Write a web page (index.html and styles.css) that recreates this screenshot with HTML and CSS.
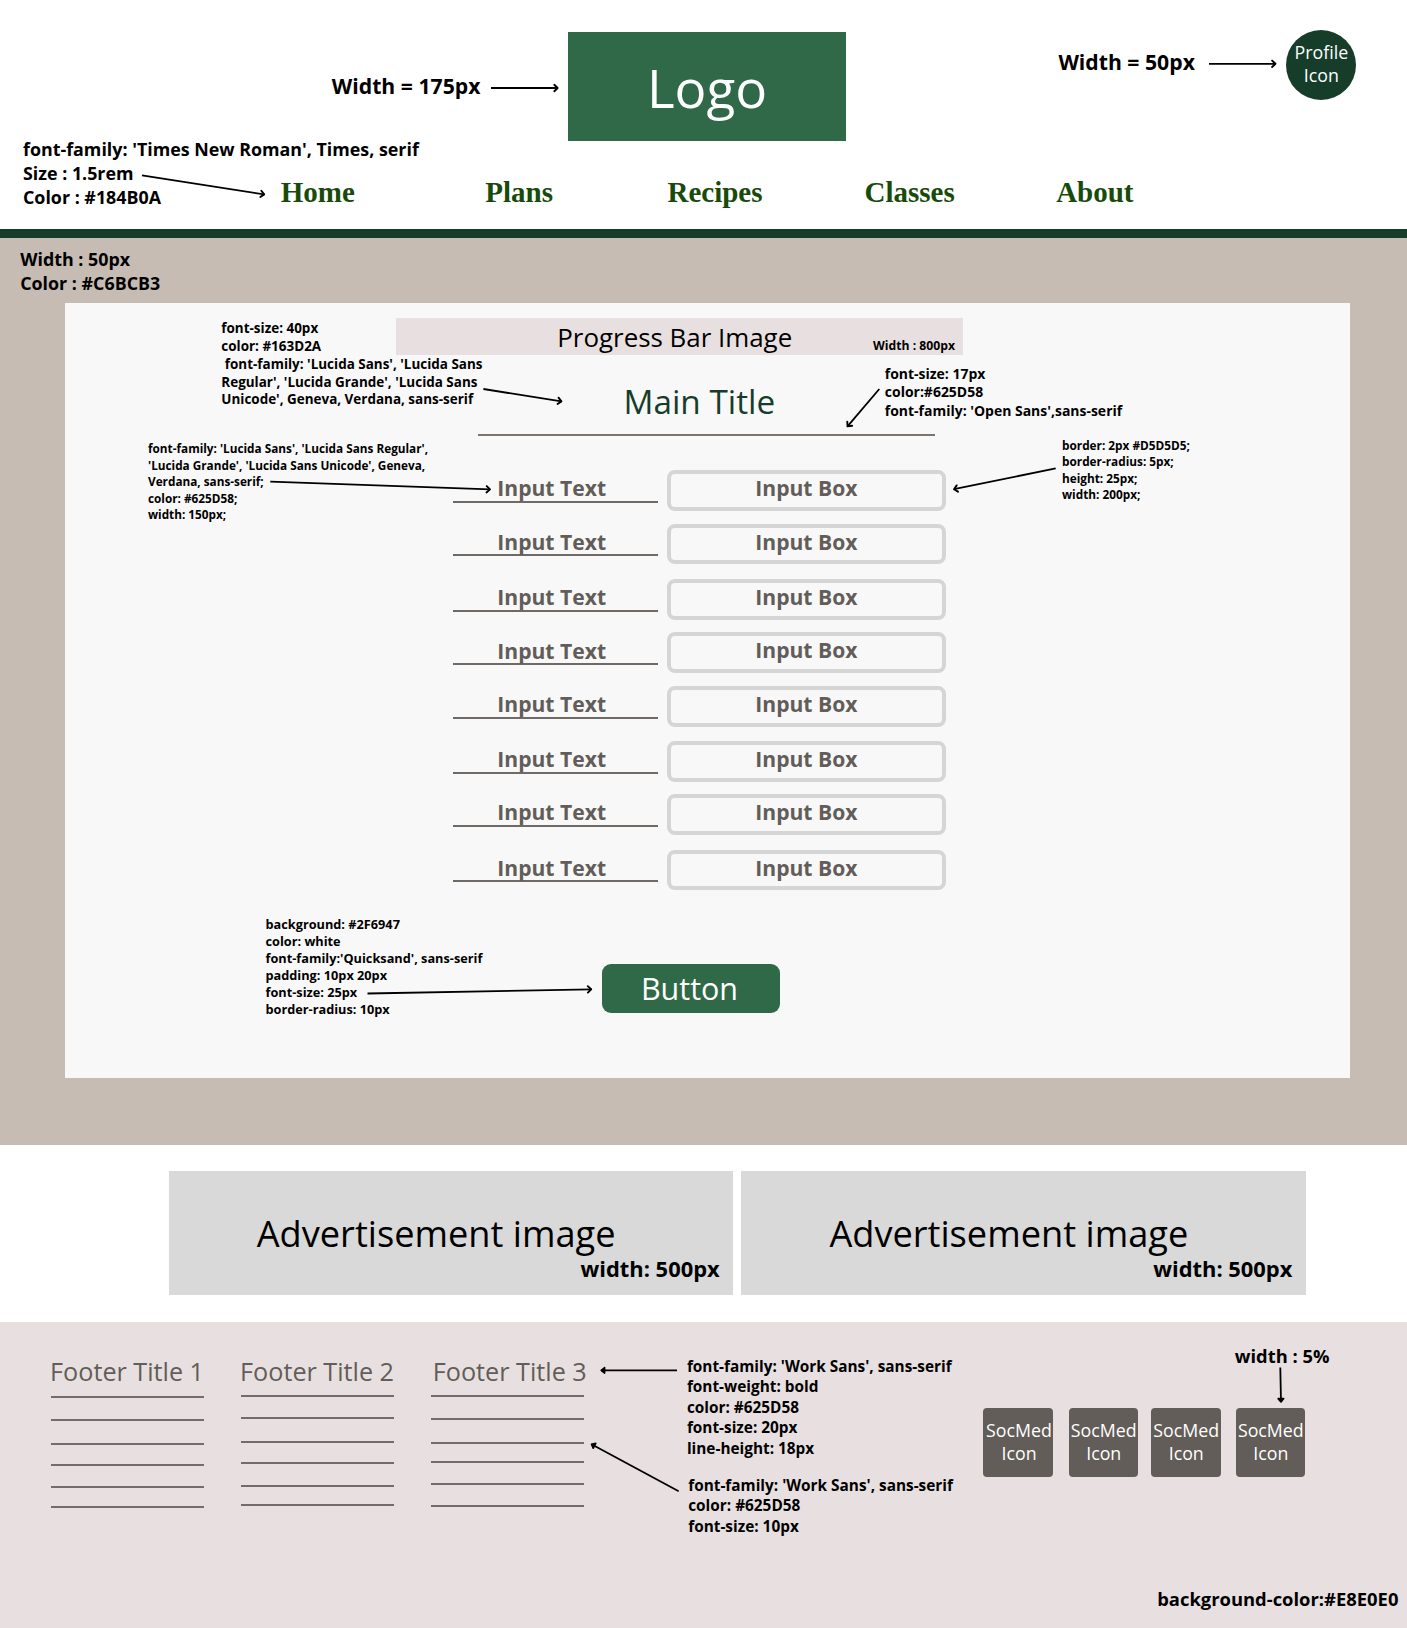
FILE: index.html
```html
<!DOCTYPE html>
<html lang="en">
<head>
<meta charset="utf-8">
<title>Form page wireframe</title>
<link rel="stylesheet" href="styles.css">
</head>
<body>
<div class="page">
  <header class="header">
    <div class="header-top">
      <div class="logo">Logo</div>
      <div class="profile">Profile<br>Icon</div>
    </div>
    <nav class="nav"><a>Home</a><a>Plans</a><a>Recipes</a><a>Classes</a><a>About</a></nav>
  </header>

  <main class="main">
    <section class="panel">
      <div class="progress">Progress Bar Image</div>
      <h1 class="title">Main Title</h1>
      <div class="title-rule"></div>
      <div class="form">
        <div class="row"><label class="label">Input Text</label><div class="box">Input Box</div></div>
        <div class="row"><label class="label">Input Text</label><div class="box">Input Box</div></div>
        <div class="row"><label class="label">Input Text</label><div class="box">Input Box</div></div>
        <div class="row"><label class="label label-low">Input Text</label><div class="box">Input Box</div></div>
        <div class="row"><label class="label">Input Text</label><div class="box">Input Box</div></div>
        <div class="row"><label class="label">Input Text</label><div class="box">Input Box</div></div>
        <div class="row"><label class="label">Input Text</label><div class="box">Input Box</div></div>
        <div class="row"><label class="label">Input Text</label><div class="box">Input Box</div></div>
      </div>
      <div class="button">Button</div>
    </section>
  </main>

  <section class="ads">
    <div class="ad"><div class="ad-name">Advertisement image</div><div class="ad-width">width: 500px</div></div>
    <div class="ad"><div class="ad-name">Advertisement image</div><div class="ad-width">width: 500px</div></div>
  </section>

  <footer class="footer">
    <div class="col col-1">
      <h2 class="col-title">Footer Title 1</h2>
      <ul class="lines"><li></li><li></li><li></li><li></li><li></li><li></li></ul>
    </div>
    <div class="col col-2">
      <h2 class="col-title">Footer Title 2</h2>
      <ul class="lines"><li></li><li></li><li></li><li></li><li></li><li></li></ul>
    </div>
    <div class="col col-3">
      <h2 class="col-title">Footer Title 3</h2>
      <ul class="lines"><li></li><li></li><li></li><li></li><li></li><li></li></ul>
    </div>
    <div class="social">
      <div class="soc">SocMed<br>Icon</div>
      <div class="soc">SocMed<br>Icon</div>
      <div class="soc">SocMed<br>Icon</div>
      <div class="soc">SocMed<br>Icon</div>
    </div>
  </footer>

  <!-- Annotations pinned over the wireframe -->
  <div class="note note-logo">Width = 175px</div>
  <div class="note note-profile">Width = 50px</div>
  <div class="note note-nav">font-family: 'Times New Roman', Times, serif</div>
  <div class="note note-nav-size">Size : 1.5rem
Color : #184B0A</div>
  <div class="note note-margin">Width : 50px
Color : #C6BCB3</div>
  <div class="note note-title">font-size: 40px
color: #163D2A
 font-family: 'Lucida Sans', 'Lucida Sans
Regular', 'Lucida Grande', 'Lucida Sans
Unicode', Geneva, Verdana, sans-serif</div>
  <div class="note note-progress">Width : 800px</div>
  <div class="note note-rule">font-size: 17px
color:#625D58
font-family: 'Open Sans',sans-serif</div>
  <div class="note note-label">font-family: 'Lucida Sans', 'Lucida Sans Regular',
'Lucida Grande', 'Lucida Sans Unicode', Geneva,
Verdana, sans-serif;
color: #625D58;
width: 150px;</div>
  <div class="note note-box">border: 2px #D5D5D5;
border-radius: 5px;
height: 25px;
width: 200px;</div>
  <div class="note note-button">background: #2F6947
color: white
font-family:'Quicksand', sans-serif
padding: 10px 20px
font-size: 25px
border-radius: 10px</div>
  <div class="note note-foot-title">font-family: 'Work Sans', sans-serif
font-weight: bold
color: #625D58
font-size: 20px
line-height: 18px</div>
  <div class="note note-foot-text">font-family: 'Work Sans', sans-serif
color: #625D58
font-size: 10px</div>
  <div class="note note-social">width : 5%</div>
  <div class="note note-footer">background-color:#E8E0E0</div>

  <svg class="arrows" width="1407" height="1628" viewBox="0 0 1407 1628" aria-hidden="true">
    <defs>
      <marker id="open" markerUnits="userSpaceOnUse" markerWidth="12" markerHeight="12" refX="8" refY="6" orient="auto">
        <path d="M4.6 2.8 L8 6 L4.6 9.2" fill="none" stroke="#000" stroke-width="1.9" stroke-linecap="round" stroke-linejoin="round"/>
      </marker>
      <marker id="solid" markerUnits="userSpaceOnUse" markerWidth="12" markerHeight="12" refX="8" refY="6" orient="auto">
        <path d="M4.6 3.2 L8 6 L4.6 8.8 Z" fill="#000" stroke="#000" stroke-width="1.6" stroke-linejoin="round"/>
      </marker>
    </defs>
    <g stroke="#000" stroke-width="1.8" fill="none">
      <path marker-end="url(#open)" d="M491 88H557.7"/>
      <path marker-end="url(#open)" d="M1209 63.8H1275.5"/>
      <path marker-end="url(#open)" d="M142 175.3L264.2 194.4"/>
      <path marker-end="url(#open)" d="M483.4 389L561.4 401.4"/>
      <path marker-end="url(#open)" d="M270.3 481.7L490 489.4"/>
      <path marker-end="url(#open)" d="M879.3 389L847.5 426.3"/>
      <path marker-end="url(#open)" d="M1055.7 468.3L954 489.2"/>
      <path marker-end="url(#open)" d="M367.5 993.5L591.2 989.3"/>
      <path marker-end="url(#solid)" d="M677 1370.3H601.2"/>
      <path marker-end="url(#solid)" d="M678.7 1491.3L591.5 1444.2"/>
      <path marker-end="url(#solid)" d="M1280.3 1367.5L1281 1402"/>
    </g>
  </svg>
</div>
</body>
</html>
```
FILE: styles.css
```css
* { box-sizing: border-box; }

body {
  margin: 0;
  background: #fff;
  color: #000;
  font-family: "Open Sans", sans-serif;
}

.page {
  position: relative;
  width: 1407px;
  height: 1628px;
  display: flex;
  flex-direction: column;
  overflow: hidden;
}

/* Header */
.header {
  height: 238px;
  border-bottom: 9px solid #163d2a;
  flex: none;
}

.header-top {
  display: flex;
  align-items: flex-start;
  height: 172px;
  padding: 30px 0 0 568px;
}

.logo {
  width: 278px;
  height: 109px;
  margin-top: 2.45px;
  padding-top: 1px;
  background: #2f6947;
  color: #fff;
  font-size: 53px;
  line-height: 110px;
  text-align: center;
}

.profile {
  width: 70px;
  height: 70px;
  margin-left: 440.4px;
  padding-top: 10.5px;
  border-radius: 50%;
  background: #163d2a;
  color: #fff;
  font-size: 17.8px;
  line-height: 23px;
  text-align: center;
}

.nav {
  display: grid;
  grid-template-columns: 204.6px 182.2px 197px 191.7px auto;
  padding-left: 280.7px;
  color: #184b0a;
  font: bold 29px/40px "Liberation Serif", "Times New Roman", Times, serif;
}

/* Main form */
.main {
  flex: none;
  height: 906.6px;
  padding: 65px 57px 0 65.4px;
  background: #c6bcb3;
}

.panel {
  display: flex;
  flex-direction: column;
  align-items: flex-start;
  height: 775px;
  padding-top: 15px;
  background: #f8f8f8;
}

.progress {
  width: 566.6px;
  height: 37px;
  margin-left: 330.8px;
  padding-right: 9.5px;
  background: #e8e0e0;
  font-size: 25.9px;
  line-height: 38px;
  text-align: center;
}

.title {
  width: 457.3px;
  margin: 23px 0 0 412.3px;
  padding-right: 14px;
  color: #163d2a;
  font-size: 33.3px;
  font-weight: 400;
  line-height: 46px;
  text-align: center;
}

.title-rule {
  width: 457.3px;
  height: 2px;
  margin: 9.6px 0 0 412.3px;
  background: #7a7571;
}

.form {
  display: grid;
  grid-template-rows: 53.6px 55.4px 53.2px 53.6px 55.2px 53.2px 55.4px 41px;
  margin: 34.4px 0 0 387.6px;
  color: #625d58;
  font-size: 21.1px;
  font-weight: 700;
  text-align: center;
}

.row {
  display: flex;
  align-items: flex-start;
  gap: 9.2px;
}

.label {
  width: 204.8px;
  height: 32.8px;
  padding-right: 7.4px;
  border-bottom: 2px solid #6f6a66;
  line-height: 36px;
}

.label-low { line-height: 38px; }

.box {
  width: 278.8px;
  height: 40.8px;
  border: 4px solid #d5d5d5;
  border-radius: 8px;
  line-height: 28px;
}

.button {
  width: 178px;
  height: 49px;
  margin: 73.4px 0 0 536.4px;
  padding-right: 2.6px;
  border-radius: 9px;
  background: #2f6947;
  color: #fff;
  font-size: 30.5px;
  line-height: 48px;
  text-align: center;
}

/* Advertisements */
.ads {
  display: flex;
  flex: none;
  gap: 8px;
  height: 177px;
  padding: 26px 0 0 168.5px;
}

.ad {
  width: 564.7px;
  height: 124.7px;
  padding: 37px 13.5px 0 0;
  background: #d9d9d9;
}

.ad-name {
  padding-left: 88.2px;
  font-size: 36.2px;
  line-height: 50px;
}

.ad-width {
  margin-top: -4px;
  font-size: 21.9px;
  font-weight: 700;
  line-height: 30px;
  text-align: right;
}

/* Footer */
.footer {
  display: flex;
  flex: 1;
  align-items: flex-start;
  padding-left: 50.5px;
  background: #e8e0e0;
}

.col { width: 190px; padding-top: 31px; }
.col-3 { width: 552.7px; }

.col-title {
  margin: 0 0 1px -0.4px;
  color: #625d58;
  font-size: 25.2px;
  font-weight: 400;
  line-height: 36px;
  white-space: nowrap;
}

.col-3 .col-title { margin-left: 2.3px; }

.lines {
  display: grid;
  width: 153px;
  margin: 0;
  padding: 0;
  list-style: none;
}

.lines li { border-bottom: 2px solid #726d69; }

.col-1 .lines { grid-template-rows: 8.6px 22.7px 23.8px 21.1px 22.6px 19.4px; }
.col-2 .lines { grid-template-rows: 7px 22.7px 23.6px 21.4px 22.4px 19.6px; }
.col-3 .lines { grid-template-rows: 7.9px 22.7px 23.6px 19px 22.1px 22.3px; }

.social {
  display: grid;
  grid-template-columns: 85.5px 82.5px 84.6px 70px;
  padding-top: 86px;
}

.soc {
  width: 69.5px;
  height: 69.5px;
  padding: 11.5px 0 0 0.6px;
  border-radius: 4px;
  background: #625d58;
  color: #fff;
  font-size: 17.8px;
  line-height: 23px;
  text-align: center;
}

.soc:first-child { padding-left: 2.2px; }

/* Annotations */
.note {
  position: absolute;
  font-weight: 700;
  white-space: pre;
}

.note-logo { left: 331.8px; top: 71.3px; font-size: 21.2px; line-height: 29px; }
.note-profile { left: 1058.4px; top: 47.2px; font-size: 21.2px; line-height: 29px; }
.note-nav { left: 23px; top: 136.8px; font-size: 17.85px; line-height: 24.1px; }
.note-nav-size { left: 23px; top: 160.9px; font-size: 17.85px; line-height: 24.1px; }
.note-margin { left: 20.2px; top: 246.8px; font-size: 17.85px; line-height: 24.1px; }
.note-title { left: 221.3px; top: 319.8px; font-size: 13.46px; line-height: 17.9px; }
.note-progress { left: 873px; top: 336.7px; font-size: 12.19px; line-height: 17px; }
.note-rule { left: 884.8px; top: 364.9px; font-size: 13.98px; line-height: 18.5px; }
.note-label { left: 148px; top: 440.3px; font-size: 11.77px; line-height: 16.4px; }
.note-box { left: 1062px; top: 437.1px; font-size: 11.8px; line-height: 16.3px; }
.note-button { left: 265.5px; top: 915.9px; font-size: 12.74px; line-height: 17px; }
.note-foot-title { left: 686.9px; top: 1356.7px; font-size: 15.37px; line-height: 20.5px; }
.note-foot-text { left: 688.2px; top: 1475.7px; font-size: 15.37px; line-height: 20.5px; }
.note-social { left: 1234.8px; top: 1343.4px; font-size: 18.34px; line-height: 25px; }
.note-footer { left: 1157.2px; top: 1586px; font-size: 18.4px; line-height: 25px; }

.arrows {
  position: absolute;
  left: 0;
  top: 0;
  pointer-events: none;
}
```
